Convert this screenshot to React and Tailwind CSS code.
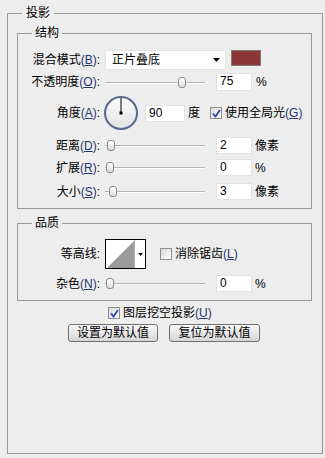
import React from 'react';

const font = { fontFamily: '"Liberation Sans", "Noto Sans CJK SC", sans-serif' };

function Key({ k }) {
  return (
    <span className="text-[#24356f]">
      (<span className="underline underline-offset-1">{k}</span>)
    </span>
  );
}

function Label({ text, k, className = '' }) {
  return (
    <div className={`w-[82px] shrink-0 text-right whitespace-nowrap ${className}`}>
      {text}
      {k && <Key k={k} />}:
    </div>
  );
}

function Slider({ pos }) {
  return (
    <div className="relative w-[100px] h-[17px] shrink-0">
      <div className="absolute left-0 right-0 top-[8px] h-[2px] border-t border-[#b4b4b4] bg-white" />
      <div
        className="absolute top-[3px] w-[8px] h-[11px] rounded-[3px] border border-[#8a8a8a] bg-gradient-to-b from-white to-[#dcdcdc]"
        style={{ left: pos }}
      />
    </div>
  );
}

function NumBox({ value, className = 'w-[36px]' }) {
  return (
    <div className={`h-[17px] bg-white border border-[#e2e2e2] pl-[3px] leading-[15px] text-[12px] text-black ${className}`}>
      {value}
    </div>
  );
}

function Check({ checked }) {
  return (
    <div className="w-[12px] h-[12px] border border-[#8e8f8f] bg-gradient-to-br from-[#d8d8d8] to-white flex items-center justify-center shrink-0">
      {checked && (
        <svg width="9" height="9" viewBox="0 0 9 9">
          <path d="M1 4.5 L3.5 7.5 L8 1" stroke="#2d45a8" strokeWidth="1.8" fill="none" />
        </svg>
      )}
    </div>
  );
}

function SliderRow({ label, k, value, unit, pos, mt }) {
  return (
    <div className={`flex items-center h-[17px] ${mt}`}>
      <Label text={label} k={k} />
      <div className="ml-[5px]">
        <Slider pos={pos} />
      </div>
      <NumBox value={value} className="w-[36px] ml-[11px]" />
      <span className="ml-[3px]">{unit}</span>
    </div>
  );
}

function Button({ children, className = '' }) {
  return (
    <div
      className={`h-[18px] rounded-[3px] border border-[#6f6f6f] bg-gradient-to-b from-[#f7f7f7] to-[#d6d6d6] flex items-center justify-center ${className}`}
    >
      {children}
    </div>
  );
}

export default function App() {
  return (
    <div className="w-[325px] h-[458px] bg-[#ededed] text-[12px] text-black pt-[5px]" style={font}>
      <fieldset className="ml-[7px] w-[316px] h-[449px] border border-[#9a9a9a] pl-[9px] pt-[4px]">
        <legend className="ml-[5px] px-[4px] leading-[16px]">投影</legend>

        <fieldset className="w-[295px] border border-[#9a9a9a] pt-[9px] pb-[8px]">
          <legend className="ml-[14px] px-[3px] leading-[16px]">结构</legend>

          <div className="flex items-center h-[20px]">
            <Label text="混合模式" k="B" />
            <div className="ml-[5px] w-[121px] h-[20px] bg-white border border-[#e4e4e4] flex items-center justify-between pl-[6px] pr-[5px]">
              <span>正片叠底</span>
              <svg width="7" height="4" viewBox="0 0 7 4">
                <path d="M0 0 H7 L3.5 4 Z" fill="#000" />
              </svg>
            </div>
            <div className="ml-[5px] w-[30px] h-[16px] self-start bg-[#8b3535] border border-[#7a7a7a]" />
          </div>

          <div className="flex items-center h-[18px] mt-[3px]">
            <Label text="不透明度" k="O" />
            <div className="ml-[5px]">
              <Slider pos={73} />
            </div>
            <NumBox value="75" className="w-[36px] h-[18px] ml-[11px]" />
            <span className="ml-[4px]">%</span>
          </div>

          <div className="flex items-center h-[36px] mt-[4px]">
            <Label text="角度" k="A" />
            <div className="ml-[4px] w-[34px] h-[34px] rounded-full border-2 border-[#58688f] bg-gradient-to-b from-[#fafafa] to-[#e4e4e4] relative shrink-0">
              <svg className="absolute inset-0" width="30" height="30" viewBox="0 0 30 30">
                <line x1="15" y1="0" x2="15" y2="15" stroke="#000" strokeWidth="1" />
                <rect x="13.5" y="13.5" width="3" height="3" fill="#000" />
              </svg>
            </div>
            <NumBox value="90" className="w-[40px] ml-[7px]" />
            <span className="ml-[3px]">度</span>
            <div className="ml-[10px] flex items-center">
              <Check checked />
              <span className="ml-[3px] whitespace-nowrap">
                使用全局光<Key k="G" />
              </span>
            </div>
          </div>

          <SliderRow label="距离" k="D" value="2" unit="像素" pos={2} mt="mt-[6px]" />
          <SliderRow label="扩展" k="R" value="0" unit="%" pos={1} mt="mt-[5px]" />
          <SliderRow label="大小" k="S" value="3" unit="像素" pos={4} mt="mt-[7px]" />
        </fieldset>

        <fieldset className="w-[295px] mt-[6px] border border-[#9a9a9a] pt-[8px] pb-[8px]">
          <legend className="ml-[14px] px-[3px] leading-[16px]">品质</legend>

          <div className="flex items-center h-[30px]">
            <Label text="等高线" />
            <div className="ml-[5px] w-[41px] h-[30px] border border-black bg-white flex shrink-0">
              <svg width="28" height="28" viewBox="0 0 28 28" className="shrink-0">
                <path d="M1 28 L28 1 L28 28 Z" fill="#9a9a9a" />
              </svg>
              <div className="flex-1 border-l border-[#b0b0b0] flex items-center justify-center">
                <svg width="5" height="3" viewBox="0 0 5 3">
                  <path d="M0 0 H5 L2.5 3 Z" fill="#000" />
                </svg>
              </div>
            </div>
            <div className="ml-[14px] flex items-center">
              <Check />
              <span className="ml-[3px] whitespace-nowrap">
                消除锯齿<Key k="L" />
              </span>
            </div>
          </div>

          <SliderRow label="杂色" k="N" value="0" unit="%" pos={1} mt="mt-[6px]" />
        </fieldset>

        <div className="flex items-center h-[14px] mt-[5px] ml-[91px]">
          <Check checked />
          <span className="ml-[3px] whitespace-nowrap">
            图层挖空投影<Key k="U" />
          </span>
        </div>

        <div className="flex mt-[4px] ml-[51px]">
          <Button className="w-[90px]">设置为默认值</Button>
          <Button className="w-[91px] ml-[11px]">复位为默认值</Button>
        </div>
      </fieldset>
    </div>
  );
}
